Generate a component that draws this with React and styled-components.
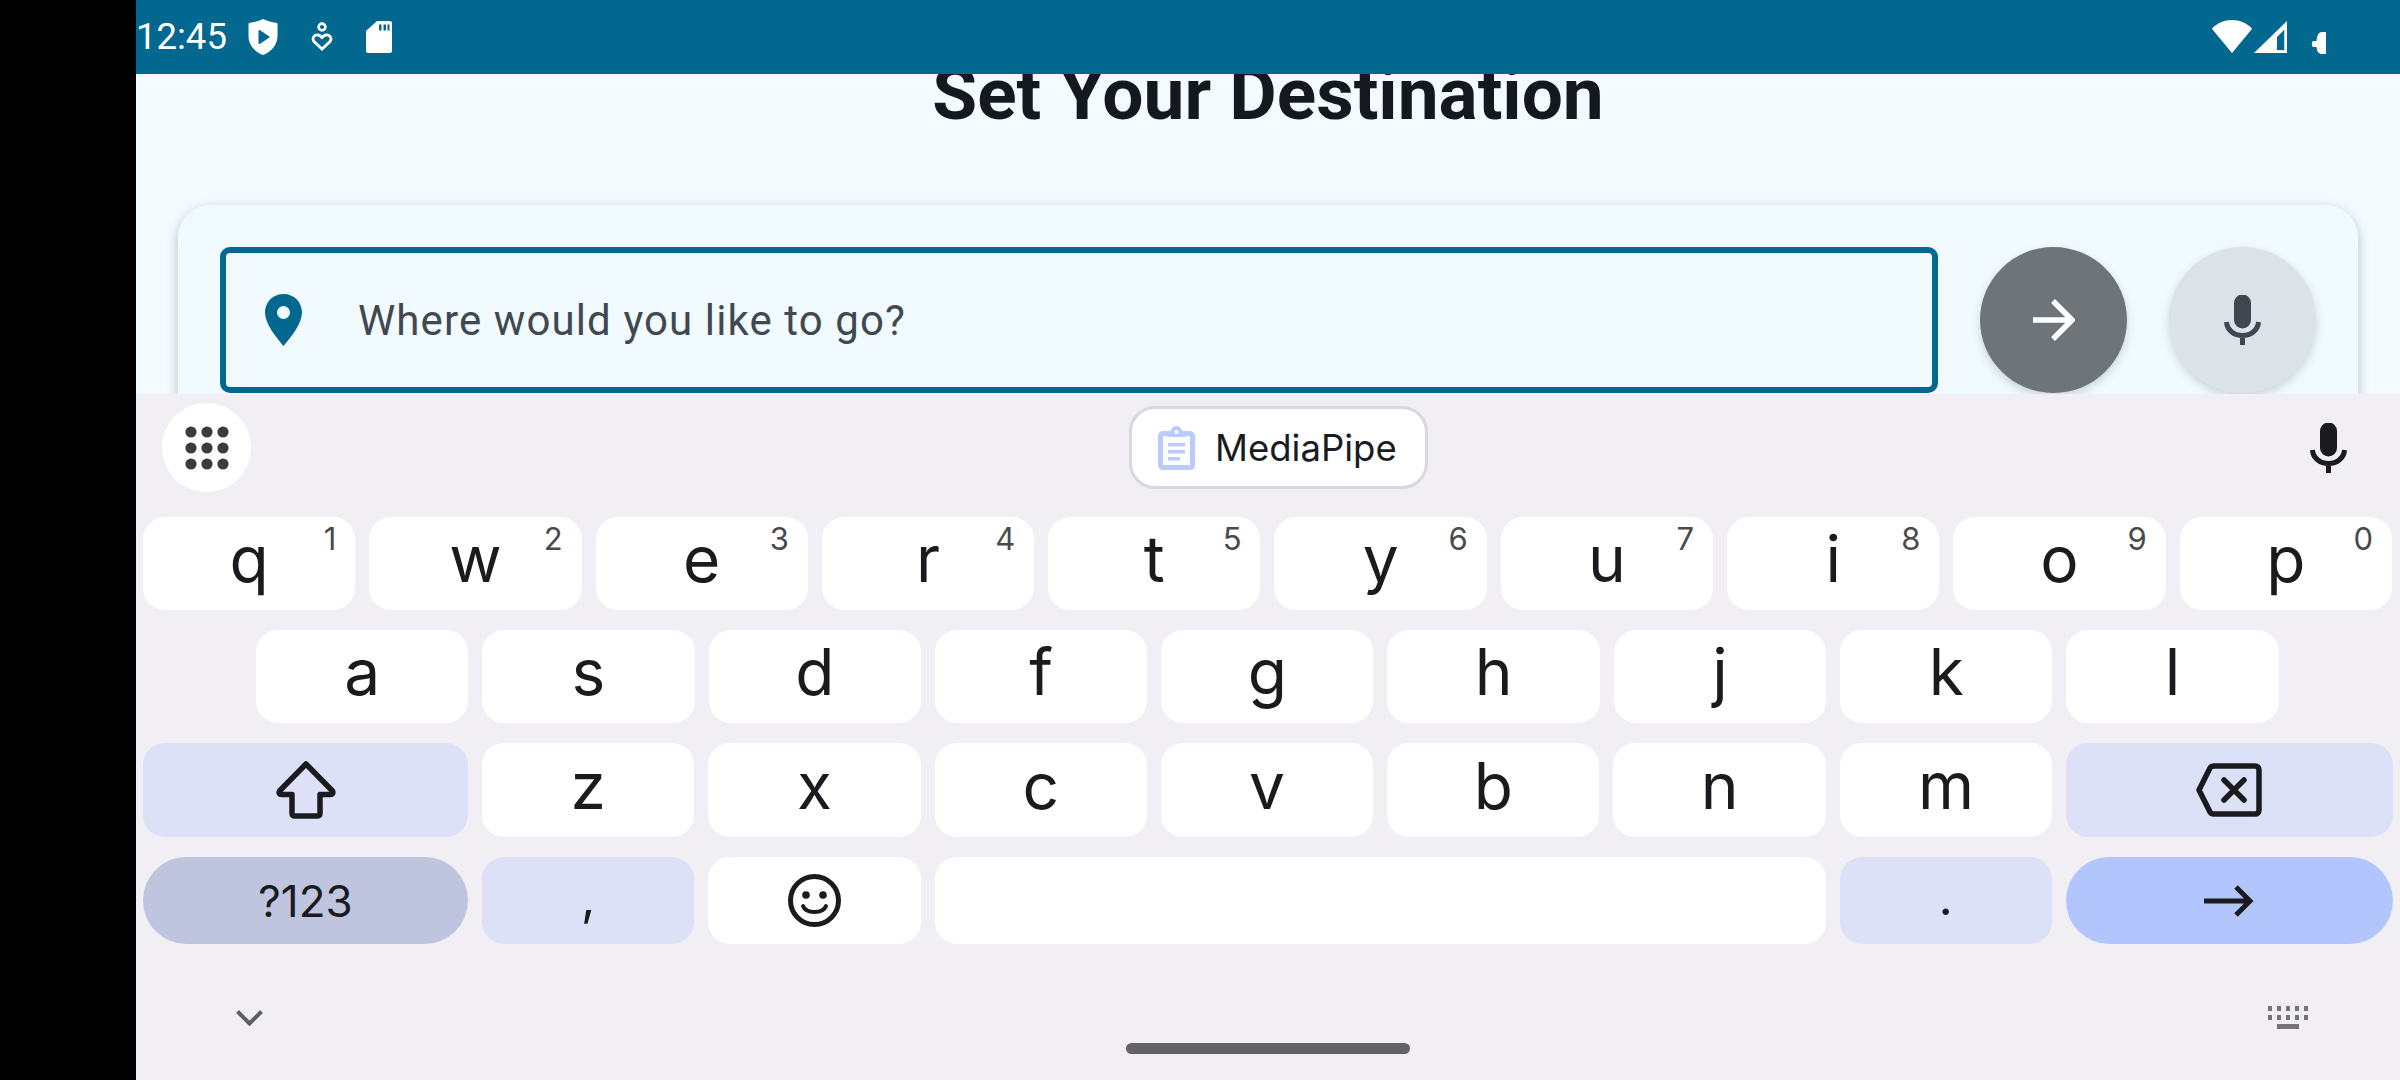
import React from 'react';
import styled, { createGlobalStyle } from 'styled-components';

const GlobalStyle = createGlobalStyle`
  html, body {
    margin: 0;
    padding: 0;
    background: #000;
  }
`;

const Frame = styled.div`
  width: 2400px;
  height: 1080px;
  display: flex;
  background: #000;
  overflow: hidden;
`;

const Screen = styled.div`
  margin-left: 136px;
  flex: 1;
  display: flex;
  flex-direction: column;
  min-width: 0;
`;

const StatusBar = styled.div`
  height: 74px;
  background: #02688f;
  display: flex;
  justify-content: space-between;
  padding: 0 74px 0 0;
  flex-shrink: 0;
`;

const StatusLeft = styled.div`
  display: flex;
  align-items: center;
`;

const Clock = styled.span`
  font-family: Roboto, sans-serif;
  font-size: 36.5px;
  line-height: 74px;
  color: #fff;
  width: 112px;
`;

const StatusRight = styled.div`
  display: flex;
  align-items: flex-start;
`;

const Page = styled.div`
  height: 320px;
  flex-shrink: 0;
  background: #f3fbff;
  overflow: hidden;
  padding: 0 42px;
`;

const Title = styled.h1`
  margin: -20px 0 0;
  font-family: Roboto, sans-serif;
  font-weight: 700;
  font-size: 73px;
  line-height: 80px;
  color: #14191f;
  text-align: center;
`;

const Card = styled.div`
  margin-top: 71px;
  height: 300px;
  background: #f1faff;
  border-radius: 32px;
  padding: 42px;
  display: flex;
  gap: 42px;
  box-shadow: 0 4px 12px rgba(30, 50, 60, 0.3);
`;

const SearchField = styled.div`
  flex: 1;
  height: 146px;
  box-sizing: border-box;
  border: 6px solid #02688f;
  border-radius: 10px;
  display: flex;
  align-items: center;
  padding-left: 39px;
  gap: 56px;
`;

const Placeholder = styled.span`
  font-family: Roboto, sans-serif;
  font-size: 42px;
  letter-spacing: 1.1px;
  color: #42484f;
`;

const RoundButton = styled.div`
  width: 147px;
  height: 146px;
  border-radius: 50%;
  background: ${(props) => (props.$dark ? '#6e757a' : '#dce3e8')};
  display: flex;
  align-items: center;
  justify-content: center;
  box-shadow: 0 4px 10px rgba(30, 50, 60, 0.18);
`;

const Keyboard = styled.div`
  flex: 1;
  background: #f1eff4;
  padding-top: 9px;
  display: flex;
  flex-direction: column;
`;

const SuggestRow = styled.div`
  height: 89px;
  display: flex;
  align-items: center;
  justify-content: space-between;
  padding: 0 53px 0 26px;
  margin-bottom: 25px;
`;

const GridButton = styled.div`
  width: 89px;
  height: 89px;
  border-radius: 50%;
  background: #fff;
  display: flex;
  align-items: center;
  justify-content: center;
`;

const Chip = styled.div`
  width: 299px;
  height: 83px;
  margin-right: 4px;
  box-sizing: border-box;
  background: #fff;
  border: 3px solid #d9d8dc;
  border-radius: 26px;
  display: flex;
  align-items: center;
  padding-left: 26px;
  gap: 20px;
`;

const ChipText = styled.span`
  font-family: Inter, sans-serif;
  font-size: 36.5px;
  color: #1b1b1f;
`;

const KeyRows = styled.div`
  display: flex;
  flex-direction: column;
  gap: 20px;
  padding: 0 7px;
`;

const KeyRow = styled.div`
  display: flex;
  gap: 14px;
  height: ${(props) => props.$height}px;
  padding-left: ${(props) => props.$indent || 0}px;
`;

const Key = styled.div`
  width: ${(props) => props.$width || 212.3}px;
  flex-shrink: 0;
  position: relative;
  box-sizing: border-box;
  display: flex;
  align-items: center;
  justify-content: center;
  padding-bottom: ${(props) => props.$lift ?? 10}px;
  border-radius: ${(props) => (props.$pill ? '44px' : '22px')};
  background: ${(props) => props.$bg || '#fff'};
  font-family: Inter, sans-serif;
  font-size: ${(props) => props.$size || 64}px;
  color: #1b1b1f;
`;

const Hint = styled.span`
  position: absolute;
  top: 5px;
  right: 19px;
  font-family: Inter, sans-serif;
  font-size: 31px;
  line-height: 34px;
  color: #4a4a4d;
`;

const BottomRow = styled.div`
  height: 23px;
  margin-top: 62px;
  display: flex;
  align-items: center;
  justify-content: space-between;
  padding: 0 92px 0 100px;
`;

const Handle = styled.div`
  width: 284px;
  height: 11px;
  border-radius: 6px;
  background: #636366;
  margin: 14px auto 0;
`;

const Icon = styled.svg`
  display: block;
  flex-shrink: 0;
`;

const Shield = () => (
  <Icon width="30" height="36" viewBox="0 0 30 36" style={{ marginRight: 33 }}>
    <path fill="#fff" d="M15 0C19 2 24 3.200 28 3.800C29 4 29.500 4.500 29.500 5.500V17C29.500 26 23 33 15 36C7 33 0.500 26 0.500 17V5.500C0.500 4.500 1 4 2 3.800C6 3.200 11 2 15 0Z" />
    <path fill="#02688f" stroke="#02688f" strokeWidth="2" strokeLinejoin="round" d="M11.500 12L20.500 18L11.500 24Z" />
  </Icon>
);

const HeartPerson = () => (
  <Icon width="22" height="30" viewBox="0 0 22 30" style={{ marginRight: 33 }}>
    <circle cx="11" cy="5" r="3.400" fill="none" stroke="#fff" strokeWidth="2.600" />
    <path
      fill="none"
      stroke="#fff"
      strokeWidth="2.800"
      d="M11 27L3 19.500C0.500 16 3.500 12.500 7 13C9 13.300 10 14.500 11 15.500C12 14.500 13 13.300 15 13C18.500 12.500 21.500 16 19 19.500Z"
    />
  </Icon>
);

const SdCard = () => (
  <Icon width="26" height="32" viewBox="0 0 26 32">
    <path fill="#fff" d="M11 0H24C25.100 0 26 0.900 26 2V30C26 31.100 25.100 32 24 32H2C0.900 32 0 31.100 0 30V10Z" />
    <path fill="#02688f" d="M13 3.500H15.500V9.500H13ZM17.500 3.500H20V9.500H17.500ZM21.500 3.500H23.500V9.500H21.500Z" />
  </Icon>
);

const Wifi = () => (
  <Icon width="40" height="33" viewBox="0 0 40 33" style={{ marginTop: 20, marginRight: 2 }}>
    <path fill="#fff" d="M20 33L0.500 9.500C0 9 0 8.500 0.500 8C5.500 3 12 0 20 0C28 0 34.500 3 39.500 8C40 8.500 40 9 39.500 9.500Z" />
  </Icon>
);

const Signal = () => (
  <Icon width="33" height="32" viewBox="0 0 33 32" style={{ marginTop: 21, marginRight: 24 }}>
    <path fill="#fff" fillRule="evenodd" d="M33 0V32H0ZM31 8L23 16V29.500H31Z" />
    <path fill="none" stroke="#fff" strokeWidth="1" opacity="0.75" d="M30.500 8V29.500H23" />
  </Icon>
);

const BatteryBit = () => (
  <Icon width="15" height="22" viewBox="0 0 15 22" style={{ marginTop: 32 }}>
    <path fill="#fff" d="M15 0V22H11C8 22 6 20 5.500 15H2C0.500 14 0.500 10 2 9H5.500C6 3 8 0 11 0Z" />
  </Icon>
);

const Pin = () => (
  <Icon width="37" height="52" viewBox="0 0 37 52">
    <path
      fill="#02688f"
      fillRule="evenodd"
      d="M18.500 0C29 0 37 8 37 18.500C37 30 26 43 18.500 52C11 43 0 30 0 18.500C0 8 8 0 18.500 0ZM18.500 12A6.500 6.500 0 1 0 18.500 25A6.500 6.500 0 1 0 18.500 12Z"
    />
  </Icon>
);

const ArrowIcon = () => (
  <Icon width="42" height="42" viewBox="0 0 42 42">
    <path fill="none" stroke="#fff" strokeWidth="5.500" d="M0 21H38M20 2L39 21L20 40" />
  </Icon>
);

const EnterArrow = () => (
  <Icon width="50" height="32" viewBox="0 0 50 32">
    <path fill="none" stroke="#1b1b1f" strokeWidth="5" d="M0 16H46M32 2L46 16L32 30" />
  </Icon>
);

const MicIcon = ({ color }) => (
  <Icon width="37" height="50" viewBox="0 0 37 50">
    <path fill={color} d="M10 8a8.500 8.500 0 0 1 17 0V25a8.500 8.500 0 0 1-17 0Z" />
    <path fill="none" stroke={color} strokeWidth="5" d="M2.500 27C3 35 10 40.500 18.500 40.500C27 40.500 34 35 34.500 27M18.500 40V50" />
  </Icon>
);

const DotGrid = () => (
  <Icon width="44" height="44" viewBox="0 0 44 44">
    {[6, 22, 38].map((cy) =>
      [6, 22, 38].map((cx) => <circle key={`${cx}-${cy}`} cx={cx} cy={cy} r="5.600" fill="#3c3c3f" />),
    )}
  </Icon>
);

const Clipboard = () => (
  <Icon width="37" height="44" viewBox="0 0 37 44">
    <path
      fill="none"
      stroke="#bccbff"
      strokeWidth="5"
      d="M11 7.500H5.500C3.500 7.500 2.500 8.500 2.500 10.500V38.500C2.500 40.500 3.500 41.500 5.500 41.500H31.500C33.500 41.500 34.500 40.500 34.500 38.500V10.500C34.500 8.500 33.500 7.500 31.500 7.500H26"
    />
    <path fill="#bccbff" fillRule="evenodd" d="M18.500 0C21.500 0 23.500 2 24.500 5H28V11H9V5H12.500C13.500 2 15.500 0 18.500 0ZM18.500 4A2 2 0 1 0 18.500 8A2 2 0 1 0 18.500 4Z" />
    <path fill="#bccbff" d="M10 17H27V20.500H10ZM10 24H27V27.500H10ZM10 31H22V34.500H10Z" />
  </Icon>
);

const ShiftIcon = () => (
  <Icon width="60" height="58" viewBox="0 0 60 58">
    <path
      fill="none"
      stroke="#1b1b1f"
      strokeWidth="5.500"
      strokeLinejoin="round"
      d="M30 3L56.500 30C57.500 32 56.500 33.500 54.500 33.500H44V52C44 54 43 55 41 55H19C17 55 16 54 16 52V33.500H5.500C3.500 33.500 2.500 32 3.500 30Z"
    />
  </Icon>
);

const BackspaceIcon = () => (
  <Icon width="66" height="54" viewBox="0 0 66 54">
    <path
      fill="none"
      stroke="#1b1b1f"
      strokeWidth="5.500"
      strokeLinejoin="round"
      d="M18 3H59C61.500 3 63 4.500 63 7V47C63 49.500 61.500 51 59 51H18C16.500 51 15 50.500 14 49L3 27L14 5C15 3.500 16.500 3 18 3Z"
    />
    <path fill="none" stroke="#1b1b1f" strokeWidth="5.500" strokeLinecap="round" d="M28 17L48 37M48 17L28 37" />
  </Icon>
);

const EmojiIcon = () => (
  <Icon width="53" height="53" viewBox="0 0 53 53">
    <circle cx="26.500" cy="26.500" r="24" fill="none" stroke="#1b1b1f" strokeWidth="5" />
    <circle cx="18" cy="21" r="3.800" fill="#1b1b1f" />
    <circle cx="35" cy="21" r="3.800" fill="#1b1b1f" />
    <path fill="none" stroke="#1b1b1f" strokeWidth="4" strokeLinecap="round" d="M15 32C18 40 35 40 38 32" />
  </Icon>
);

const Chevron = () => (
  <Icon width="27" height="16" viewBox="0 0 27 16">
    <path fill="none" stroke="#5f5f62" strokeWidth="4" d="M1.500 1.500L13.500 13.500L25.500 1.500" />
  </Icon>
);

const KeyboardHide = () => (
  <Icon width="40" height="23" viewBox="0 0 40 23">
    {[0, 9, 18, 27, 36].map((x) => (
      <React.Fragment key={x}>
        <rect x={x} y="0" width="4" height="5" fill="#757578" />
        <rect x={x} y="9" width="4" height="5" fill="#757578" />
      </React.Fragment>
    ))}
    <rect x="9" y="18" width="22" height="5" fill="#757578" />
  </Icon>
);

const topRow = [
  ['q', '1'], ['w', '2'], ['e', '3'], ['r', '4'], ['t', '5'],
  ['y', '6'], ['u', '7'], ['i', '8'], ['o', '9'], ['p', '0'],
];
const homeRow = ['a', 's', 'd', 'f', 'g', 'h', 'j', 'k', 'l'];
const lowerRow = ['z', 'x', 'c', 'v', 'b', 'n', 'm'];

export default function App() {
  return (
    <>
      <GlobalStyle />
      <Frame>
        <Screen>
          <StatusBar>
            <StatusLeft>
              <Clock>12:45</Clock>
              <Shield />
              <HeartPerson />
              <SdCard />
            </StatusLeft>
            <StatusRight>
              <Wifi />
              <Signal />
              <BatteryBit />
            </StatusRight>
          </StatusBar>

          <Page>
            <Title>Set Your Destination</Title>
            <Card>
              <SearchField>
                <Pin />
                <Placeholder>Where would you like to go?</Placeholder>
              </SearchField>
              <RoundButton $dark>
                <ArrowIcon />
              </RoundButton>
              <RoundButton>
                <MicIcon color="#40474f" />
              </RoundButton>
            </Card>
          </Page>

          <Keyboard>
            <SuggestRow>
              <GridButton>
                <DotGrid />
              </GridButton>
              <Chip>
                <Clipboard />
                <ChipText>MediaPipe</ChipText>
              </Chip>
              <MicIcon color="#1b1b1f" />
            </SuggestRow>

            <KeyRows>
              <KeyRow $height={93}>
                {topRow.map(([letter, hint]) => (
                  <Key key={letter}>
                    {letter}
                    <Hint>{hint}</Hint>
                  </Key>
                ))}
              </KeyRow>
              <KeyRow $height={93} $indent={113}>
                {homeRow.map((letter) => (
                  <Key key={letter}>{letter}</Key>
                ))}
              </KeyRow>
              <KeyRow $height={94}>
                <Key $width={325} $bg="#dde1f7" $lift={0}>
                  <ShiftIcon />
                </Key>
                {lowerRow.map((letter) => (
                  <Key key={letter}>{letter}</Key>
                ))}
                <Key $width={326.5} $bg="#dde1f7" $lift={0}>
                  <BackspaceIcon />
                </Key>
              </KeyRow>
              <KeyRow $height={87}>
                <Key $width={325} $bg="#bfc5de" $pill $size={44} $lift={0}>?123</Key>
                <Key $bg="#dde1f7" $size={50} $lift={8}>,</Key>
                <Key $lift={0}>
                  <EmojiIcon />
                </Key>
                <Key $width={891} $lift={0}></Key>
                <Key $bg="#dde1f7" $size={50} $lift={8}>.</Key>
                <Key $width={327} $bg="#b3c5fd" $pill $lift={0}>
                  <EnterArrow />
                </Key>
              </KeyRow>
            </KeyRows>

            <BottomRow>
              <Chevron />
              <KeyboardHide />
            </BottomRow>
            <Handle />
          </Keyboard>
        </Screen>
      </Frame>
    </>
  );
}
